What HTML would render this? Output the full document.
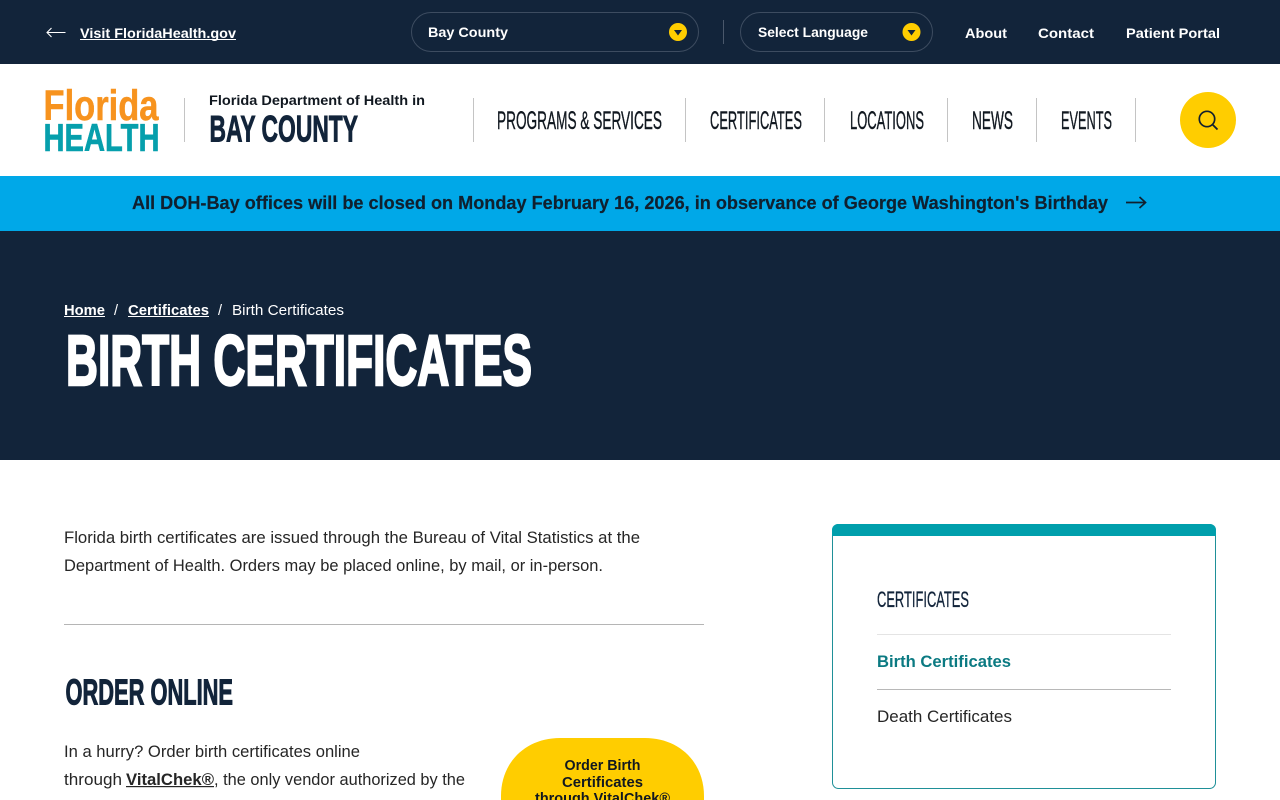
<!DOCTYPE html>
<html lang="en">
<head>
<meta charset="utf-8">
<title>Birth Certificates | Florida Department of Health in Bay County</title>
<style>
html,body{margin:0;padding:0;width:1280px;height:800px;overflow:hidden;background:#fff}
svg{display:block;position:absolute;left:0;top:0}
text{font-family:"Liberation Sans",Arial,sans-serif;white-space:pre}
text.cn{font-family:"Liberation Sans Narrow","Liberation Sans",Arial,sans-serif}
.b{font-weight:700}
.w{fill:#fff}
.nav{font-size:25px;fill:#111820;font-weight:400;stroke:#111820;stroke-width:.4px}
.top{font-size:14px;font-weight:700;fill:#fff}
.body{font-size:16.5px;fill:#262626}
.h{font-weight:700;fill:#12243a;stroke:#12243a;stroke-width:.9px}
</style>
</head>
<body>
<svg width="1280" height="800" viewBox="0 0 1280 800" xmlns="http://www.w3.org/2000/svg">
  <!-- Top bar -->
  <rect x="0" y="0" width="1280" height="64" fill="#12243a"/>
  <path d="M65.500 32.500H47M51.500 28L47 32.500L51.500 37" fill="none" stroke="#fff" stroke-width="1.100"/>
  <text class="top" x="80" y="38" textLength="156" lengthAdjust="spacingAndGlyphs">Visit FloridaHealth.gov</text>
  <rect x="80" y="39" width="156" height="1" fill="#fff"/>

  <rect x="411.500" y="12.500" width="287" height="39" rx="19.500" fill="none" stroke="#3d4c60"/>
  <text class="top" x="428" y="37" textLength="80" lengthAdjust="spacingAndGlyphs">Bay County</text>
  <circle cx="678" cy="32" r="9" fill="#ffcd00"/>
  <path d="M674 30H682L678 35.500Z" fill="#12243a"/>
  <rect x="723" y="20" width="1" height="24" fill="#4a586b"/>
  <rect x="740.500" y="12.500" width="192" height="39" rx="19.500" fill="none" stroke="#3d4c60"/>
  <text class="top" x="758" y="37" textLength="110" lengthAdjust="spacingAndGlyphs">Select Language</text>
  <circle cx="911.500" cy="32" r="9" fill="#ffcd00"/>
  <path d="M907.500 30H915.500L911.500 35.500Z" fill="#12243a"/>
  <text class="top" x="965" y="38" textLength="42" lengthAdjust="spacingAndGlyphs">About</text>
  <text class="top" x="1038" y="38" textLength="56" lengthAdjust="spacingAndGlyphs">Contact</text>
  <text class="top" x="1126" y="38" textLength="94" lengthAdjust="spacingAndGlyphs">Patient Portal</text>

  <!-- Logo -->
  <text class="b" x="43.500" y="120" font-size="43" fill="#f7931e" stroke="#f7931e" stroke-width=".5" textLength="115" lengthAdjust="spacingAndGlyphs">Florida</text>
  <text class="b" x="43.500" y="151" font-size="39" fill="#069fac" stroke="#069fac" stroke-width=".6" textLength="116" lengthAdjust="spacingAndGlyphs">HEALTH</text>
  <rect x="184" y="98" width="1" height="44" fill="#c4c4c4"/>
  <text class="b" x="209" y="105" font-size="14" fill="#111820" textLength="216" lengthAdjust="spacingAndGlyphs">Florida Department of Health in</text>
  <text class="h cn" x="209.500" y="141.500" font-size="37" textLength="148.500" lengthAdjust="spacingAndGlyphs">BAY COUNTY</text>

  <!-- Nav -->
  <g fill="#c4c4c4">
    <rect x="473" y="98" width="1" height="44"/>
    <rect x="685" y="98" width="1" height="44"/>
    <rect x="824" y="98" width="1" height="44"/>
    <rect x="947" y="98" width="1" height="44"/>
    <rect x="1036" y="98" width="1" height="44"/>
    <rect x="1135" y="98" width="1" height="44"/>
  </g>
  <text class="nav cn" x="497" y="129" textLength="165" lengthAdjust="spacingAndGlyphs">PROGRAMS &amp; SERVICES</text>
  <text class="nav cn" x="710" y="129" textLength="92" lengthAdjust="spacingAndGlyphs">CERTIFICATES</text>
  <text class="nav cn" x="850" y="129" textLength="74" lengthAdjust="spacingAndGlyphs">LOCATIONS</text>
  <text class="nav cn" x="972" y="129" textLength="41" lengthAdjust="spacingAndGlyphs">NEWS</text>
  <text class="nav cn" x="1061" y="129" textLength="51" lengthAdjust="spacingAndGlyphs">EVENTS</text>
  <circle cx="1208" cy="120" r="28" fill="#ffcd00"/>
  <circle cx="1207" cy="119" r="7.700" fill="none" stroke="#13202e" stroke-width="1.700"/>
  <path d="M1212.500 124.500L1217.500 129.500" stroke="#13202e" stroke-width="1.800" fill="none"/>

  <!-- Alert -->
  <rect x="0" y="176" width="1280" height="55" fill="#00a8e8"/>
  <text class="b" x="132" y="209" font-size="18.500" fill="#10202f" stroke="#10202f" stroke-width=".2" textLength="976" lengthAdjust="spacingAndGlyphs">All DOH-Bay offices will be closed on Monday February 16, 2026, in observance of George Washington's Birthday</text>
  <path d="M1126 202.500H1145M1139.500 197L1145.500 202.500L1139.500 208" fill="none" stroke="#10202f" stroke-width="1.700"/>

  <!-- Hero -->
  <rect x="0" y="231" width="1280" height="229" fill="#12243a"/>
  <text class="b w" x="64" y="315" font-size="14.500" textLength="41" lengthAdjust="spacingAndGlyphs">Home</text>
  <rect x="64" y="316" width="41" height="1" fill="#fff"/>
  <text class="w" x="114" y="315" font-size="14.500">/</text>
  <text class="b w" x="128" y="315" font-size="14.500" textLength="81" lengthAdjust="spacingAndGlyphs">Certificates</text>
  <rect x="128" y="316" width="81" height="1" fill="#fff"/>
  <text class="w" x="218" y="315" font-size="14.500">/</text>
  <text class="w" x="232" y="315" font-size="14.500" textLength="112" lengthAdjust="spacingAndGlyphs">Birth Certificates</text>
  <text class="b w cn" x="66" y="385" font-size="71" stroke="#fff" stroke-width="2.400" textLength="466" lengthAdjust="spacingAndGlyphs">BIRTH CERTIFICATES</text>

  <!-- Main -->
  <text class="body" x="64" y="543" textLength="576" lengthAdjust="spacingAndGlyphs">Florida birth certificates are issued through the Bureau of Vital Statistics at the</text>
  <text class="body" x="64" y="571" textLength="539" lengthAdjust="spacingAndGlyphs">Department of Health. Orders may be placed online, by mail, or in-person.</text>
  <rect x="64" y="624" width="640" height="1" fill="#b5b5b5"/>
  <text class="h cn" x="65.500" y="704.500" font-size="36.500" textLength="167.500" lengthAdjust="spacingAndGlyphs" style="stroke-width:1.100px">ORDER ONLINE</text>
  <text class="body" x="64" y="757" textLength="296" lengthAdjust="spacingAndGlyphs">In a hurry? Order birth certificates online</text>
  <text class="body" x="64" y="785" textLength="58" lengthAdjust="spacingAndGlyphs">through</text>
  <text class="body b" x="126" y="785" textLength="88" lengthAdjust="spacingAndGlyphs" style="font-weight:700">VitalChek®</text>
  <rect x="126" y="786" width="88" height="1.200" fill="#262626"/>
  <text class="body" x="214" y="785" textLength="251" lengthAdjust="spacingAndGlyphs">, the only vendor authorized by the</text>

  <path d="M501 800V796C501 762 526 738 560 738H645C679 738 704 762 704 796V800Z" fill="#ffcd00"/>
  <g font-size="14.500" fill="#111820" text-anchor="middle">
    <text x="602.500" y="770" style="font-weight:700" textLength="76" lengthAdjust="spacingAndGlyphs">Order Birth</text>
    <text x="602.500" y="787" style="font-weight:700" textLength="81" lengthAdjust="spacingAndGlyphs">Certificates</text>
    <text x="602.500" y="803" style="font-weight:700" textLength="135" lengthAdjust="spacingAndGlyphs">through VitalChek®</text>
  </g>

  <!-- Sidebar -->
  <rect x="832.500" y="524.500" width="383" height="264" rx="6" fill="#fff" stroke="#1f9098" stroke-width="1"/>
  <path d="M832 536V530a6 6 0 0 1 6-6H1210a6 6 0 0 1 6 6V536Z" fill="#009fac"/>
  <text class="cn" x="877" y="607" font-size="22" fill="#12243a" stroke="#12243a" stroke-width=".3" textLength="92" lengthAdjust="spacingAndGlyphs">CERTIFICATES</text>
  <rect x="877" y="634" width="294" height="1" fill="#e4e4e4"/>
  <text class="b" x="877" y="667" font-size="16.500" fill="#0b7a82" textLength="134" lengthAdjust="spacingAndGlyphs">Birth Certificates</text>
  <rect x="877" y="689" width="294" height="1" fill="#b8b8b8"/>
  <text class="body" x="877" y="722" textLength="135" lengthAdjust="spacingAndGlyphs">Death Certificates</text>
</svg>
</body>
</html>
